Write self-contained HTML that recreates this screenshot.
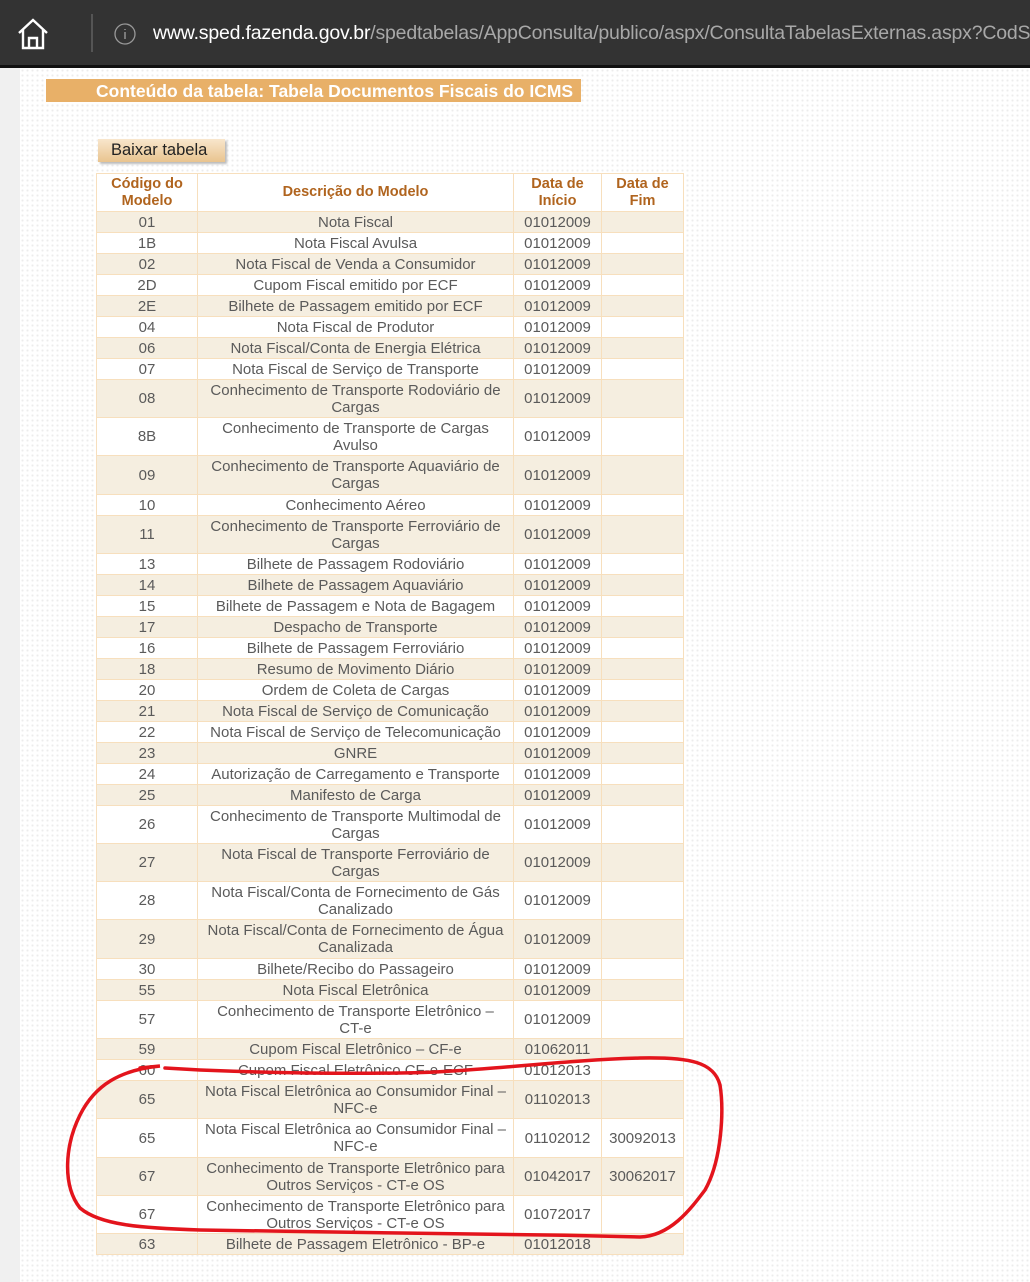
<!DOCTYPE html>
<html><head><meta charset="utf-8"><style>
*{margin:0;padding:0;box-sizing:border-box}
body{width:1030px;height:1282px;overflow:hidden;background:#fff;font-family:"Liberation Sans",Arial,sans-serif;position:relative}
#bar{position:absolute;left:0;top:0;width:1030px;height:68px;background:#333;border-bottom:3px solid #111;overflow:hidden}
#url{position:absolute;left:153px;top:22px;font-size:19.5px;color:#a8a8a8;white-space:nowrap;letter-spacing:-0.2px;width:877px;overflow:hidden}
#url b{font-weight:normal;color:#fff}
#left{position:absolute;left:0;top:68px;width:20px;height:1214px;background:#f0f0f0}
#dots{position:absolute;left:20px;top:68px;width:1010px;height:1214px;background-image:radial-gradient(#ececec 1px,transparent 1.2px);background-size:5px 5px}
#title{position:absolute;left:46px;top:79px;width:535px;height:23px;background:#e8b068;color:#fff;font-weight:bold;font-size:17.5px;line-height:24px;padding-left:50px;white-space:nowrap;overflow:hidden}
#btn{position:absolute;left:98px;top:139px;width:127px;height:23px;background:linear-gradient(#f8e6cc,#e9c48f);box-shadow:2px 2px 2px #bbb;font-size:16.5px;line-height:22px;padding-left:13px;color:#222}
table{position:absolute;left:96px;top:173px;border-collapse:collapse;font-size:15px;color:#5a5a5a;background:#fff;table-layout:fixed}
td,th{border:1px solid #f7dfbd;text-align:center;line-height:17px;padding:0 2px;white-space:nowrap}
th{color:#b0641e;font-weight:bold;height:38px;font-size:14.5px}
tr:nth-child(even) td{background:#f5eee0}
tr.s td{height:21px}
tr.d td{height:38px}
tr.e td{height:39px}
svg{position:absolute;left:0;top:0}
</style></head><body>
<div id="bar">
<svg width="60" height="65" style="left:15px;top:15px"><path d="M4 18 L18 5 L32 18 M8 15 V33 H28 V15 M14 33 V23 H22 V33" fill="none" stroke="#fff" stroke-width="2.4"/></svg>
<div style="position:absolute;left:91px;top:14px;width:2px;height:38px;background:#555"></div>
<svg width="30" height="30" style="left:113px;top:22px"><circle cx="12" cy="12" r="10" fill="none" stroke="#999" stroke-width="1.3"/><path d="M12 10 V17 M12 7 V8" stroke="#999" stroke-width="1.4"/></svg>
<div id="url"><b>www.sped.fazenda.gov.br</b>/spedtabelas/AppConsulta/publico/aspx/ConsultaTabelasExternas.aspx?CodSistema=SpedFiscal</div>
</div>
<div id="left"></div><div id="dots"></div>
<div id="title">Conteúdo da tabela: Tabela Documentos Fiscais do ICMS</div>
<div id="btn">Baixar tabela</div>
<table>
<colgroup><col style="width:101px"><col style="width:316px"><col style="width:88px"><col style="width:82px"></colgroup>
<tr><th>Código do<br>Modelo</th><th>Descrição do Modelo</th><th>Data de<br>Início</th><th>Data de<br>Fim</th></tr>
<tr class="s"><td>01</td><td>Nota Fiscal</td><td>01012009</td><td></td></tr>
<tr class="s"><td>1B</td><td>Nota Fiscal Avulsa</td><td>01012009</td><td></td></tr>
<tr class="s"><td>02</td><td>Nota Fiscal de Venda a Consumidor</td><td>01012009</td><td></td></tr>
<tr class="s"><td>2D</td><td>Cupom Fiscal emitido por ECF</td><td>01012009</td><td></td></tr>
<tr class="s"><td>2E</td><td>Bilhete de Passagem emitido por ECF</td><td>01012009</td><td></td></tr>
<tr class="s"><td>04</td><td>Nota Fiscal de Produtor</td><td>01012009</td><td></td></tr>
<tr class="s"><td>06</td><td>Nota Fiscal/Conta de Energia Elétrica</td><td>01012009</td><td></td></tr>
<tr class="s"><td>07</td><td>Nota Fiscal de Serviço de Transporte</td><td>01012009</td><td></td></tr>
<tr class="d"><td>08</td><td>Conhecimento de Transporte Rodoviário de<br>Cargas</td><td>01012009</td><td></td></tr>
<tr class="d"><td>8B</td><td>Conhecimento de Transporte de Cargas<br>Avulso</td><td>01012009</td><td></td></tr>
<tr class="e"><td>09</td><td>Conhecimento de Transporte Aquaviário de<br>Cargas</td><td>01012009</td><td></td></tr>
<tr class="s"><td>10</td><td>Conhecimento Aéreo</td><td>01012009</td><td></td></tr>
<tr class="d"><td>11</td><td>Conhecimento de Transporte Ferroviário de<br>Cargas</td><td>01012009</td><td></td></tr>
<tr class="s"><td>13</td><td>Bilhete de Passagem Rodoviário</td><td>01012009</td><td></td></tr>
<tr class="s"><td>14</td><td>Bilhete de Passagem Aquaviário</td><td>01012009</td><td></td></tr>
<tr class="s"><td>15</td><td>Bilhete de Passagem e Nota de Bagagem</td><td>01012009</td><td></td></tr>
<tr class="s"><td>17</td><td>Despacho de Transporte</td><td>01012009</td><td></td></tr>
<tr class="s"><td>16</td><td>Bilhete de Passagem Ferroviário</td><td>01012009</td><td></td></tr>
<tr class="s"><td>18</td><td>Resumo de Movimento Diário</td><td>01012009</td><td></td></tr>
<tr class="s"><td>20</td><td>Ordem de Coleta de Cargas</td><td>01012009</td><td></td></tr>
<tr class="s"><td>21</td><td>Nota Fiscal de Serviço de Comunicação</td><td>01012009</td><td></td></tr>
<tr class="s"><td>22</td><td>Nota Fiscal de Serviço de Telecomunicação</td><td>01012009</td><td></td></tr>
<tr class="s"><td>23</td><td>GNRE</td><td>01012009</td><td></td></tr>
<tr class="s"><td>24</td><td>Autorização de Carregamento e Transporte</td><td>01012009</td><td></td></tr>
<tr class="s"><td>25</td><td>Manifesto de Carga</td><td>01012009</td><td></td></tr>
<tr class="d"><td>26</td><td>Conhecimento de Transporte Multimodal de<br>Cargas</td><td>01012009</td><td></td></tr>
<tr class="d"><td>27</td><td>Nota Fiscal de Transporte Ferroviário de<br>Cargas</td><td>01012009</td><td></td></tr>
<tr class="d"><td>28</td><td>Nota Fiscal/Conta de Fornecimento de Gás<br>Canalizado</td><td>01012009</td><td></td></tr>
<tr class="e"><td>29</td><td>Nota Fiscal/Conta de Fornecimento de Água<br>Canalizada</td><td>01012009</td><td></td></tr>
<tr class="s"><td>30</td><td>Bilhete/Recibo do Passageiro</td><td>01012009</td><td></td></tr>
<tr class="s"><td>55</td><td>Nota Fiscal Eletrônica</td><td>01012009</td><td></td></tr>
<tr class="d"><td>57</td><td>Conhecimento de Transporte Eletrônico –<br>CT-e</td><td>01012009</td><td></td></tr>
<tr class="s"><td>59</td><td>Cupom Fiscal Eletrônico – CF-e</td><td>01062011</td><td></td></tr>
<tr class="s"><td>60</td><td>Cupom Fiscal Eletrônico CF-e-ECF</td><td>01012013</td><td></td></tr>
<tr class="d"><td>65</td><td>Nota Fiscal Eletrônica ao Consumidor Final –<br>NFC-e</td><td>01102013</td><td></td></tr>
<tr class="e"><td>65</td><td>Nota Fiscal Eletrônica ao Consumidor Final –<br>NFC-e</td><td>01102012</td><td>30092013</td></tr>
<tr class="d"><td>67</td><td>Conhecimento de Transporte Eletrônico para<br>Outros Serviços - CT-e OS</td><td>01042017</td><td>30062017</td></tr>
<tr class="d"><td>67</td><td>Conhecimento de Transporte Eletrônico para<br>Outros Serviços - CT-e OS</td><td>01072017</td><td></td></tr>
<tr class="s"><td>63</td><td>Bilhete de Passagem Eletrônico - BP-e</td><td>01012018</td><td></td></tr>
</table>
<svg width="1030" height="1282"><path d="M140 1068 L160 1066 C120 1070 95 1085 80 1115 C65 1145 62 1185 80 1208 C100 1225 140 1228 200 1230 L400 1233 C500 1234 560 1235 640 1237 C670 1236 690 1210 705 1190 C722 1160 724 1110 720 1085 C714 1062 690 1057 640 1058 C560 1060 480 1072 400 1073 C320 1074 250 1072 200 1070 L165 1068" fill="none" stroke="#e3141c" stroke-width="3.5" stroke-linecap="round"/></svg>
</body></html>
